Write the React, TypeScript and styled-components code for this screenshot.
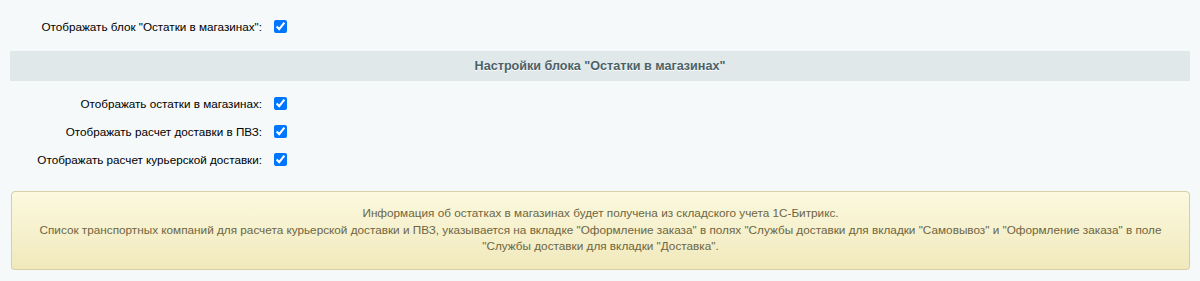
import React from 'react';
import styled, { createGlobalStyle } from 'styled-components';

const GlobalStyle = createGlobalStyle`
  html, body {
    margin: 0;
    padding: 0;
    background: #f5f9f9;
  }
  body {
    font-family: "Liberation Sans", Arial, sans-serif;
    font-size: 12px;
    color: #000;
  }
`;

const Page = styled.div`
  padding: 12px 10px 0 10px;
  display: flex;
  flex-direction: column;
`;

const Row = styled.div`
  display: grid;
  grid-template-columns: 252px auto;
  column-gap: 12px;
  align-items: center;
  height: 28px;
`;

const Label = styled.label`
  text-align: right;
  color: #000;
  font-size: 11.7px;
  white-space: nowrap;
`;

const Check = styled.input.attrs({ type: 'checkbox' })`
  margin: 0;
  width: 13px;
  height: 13px;
  accent-color: #0075ff;
`;

const SectionHeader = styled.div<{ $top: number }>`
  margin-top: ${p => p.$top}px;
  height: 30px;
  background: #e0e8ea;
  display: flex;
  align-items: center;
  justify-content: center;
  font-size: 12.6px;
  font-weight: bold;
  color: #4b6267;
  text-shadow: 0 1px #fff;
`;

const Fields = styled.div`
  margin-top: 8px;
  display: flex;
  flex-direction: column;
`;

const Note = styled.div`
  margin: 18px 0 0 1px;
  padding: 13px 12px 14px;
  border: 1px solid #d8cfa4;
  border-radius: 4px;
  background: linear-gradient(to bottom, #fbf9df 0%, #f1e9bc 100%);
  box-shadow: 0 1px 1px rgba(120, 100, 40, 0.15);
  color: #6e6542;
  font-size: 11.75px;
  text-align: center;
  line-height: 16.5px;
`;

const fields = [
  'Отображать остатки в магазинах:',
  'Отображать расчет доставки в ПВЗ:',
  'Отображать расчет курьерской доставки:',
];

export default function App() {
  return (
    <>
      <GlobalStyle />
      <Page>
        <Row>
          <Label>Отображать блок "Остатки в магазинах":</Label>
          <Check defaultChecked />
        </Row>
        <SectionHeader $top={11}>Настройки блока "Остатки в магазинах"</SectionHeader>
        <Fields>
          {fields.map(text => (
            <Row key={text}>
              <Label>{text}</Label>
              <Check defaultChecked />
            </Row>
          ))}
        </Fields>
        <Note>
          Информация об остатках в магазинах будет получена из складского учета 1С-Битрикс.
          <br />
          Список транспортных компаний для расчета курьерской доставки и ПВЗ, указывается на вкладке "Оформление заказа" в полях "Службы доставки для вкладки "Самовывоз" и "Оформление заказа" в поле "Службы доставки для вкладки "Доставка".
        </Note>
      </Page>
    </>
  );
}
